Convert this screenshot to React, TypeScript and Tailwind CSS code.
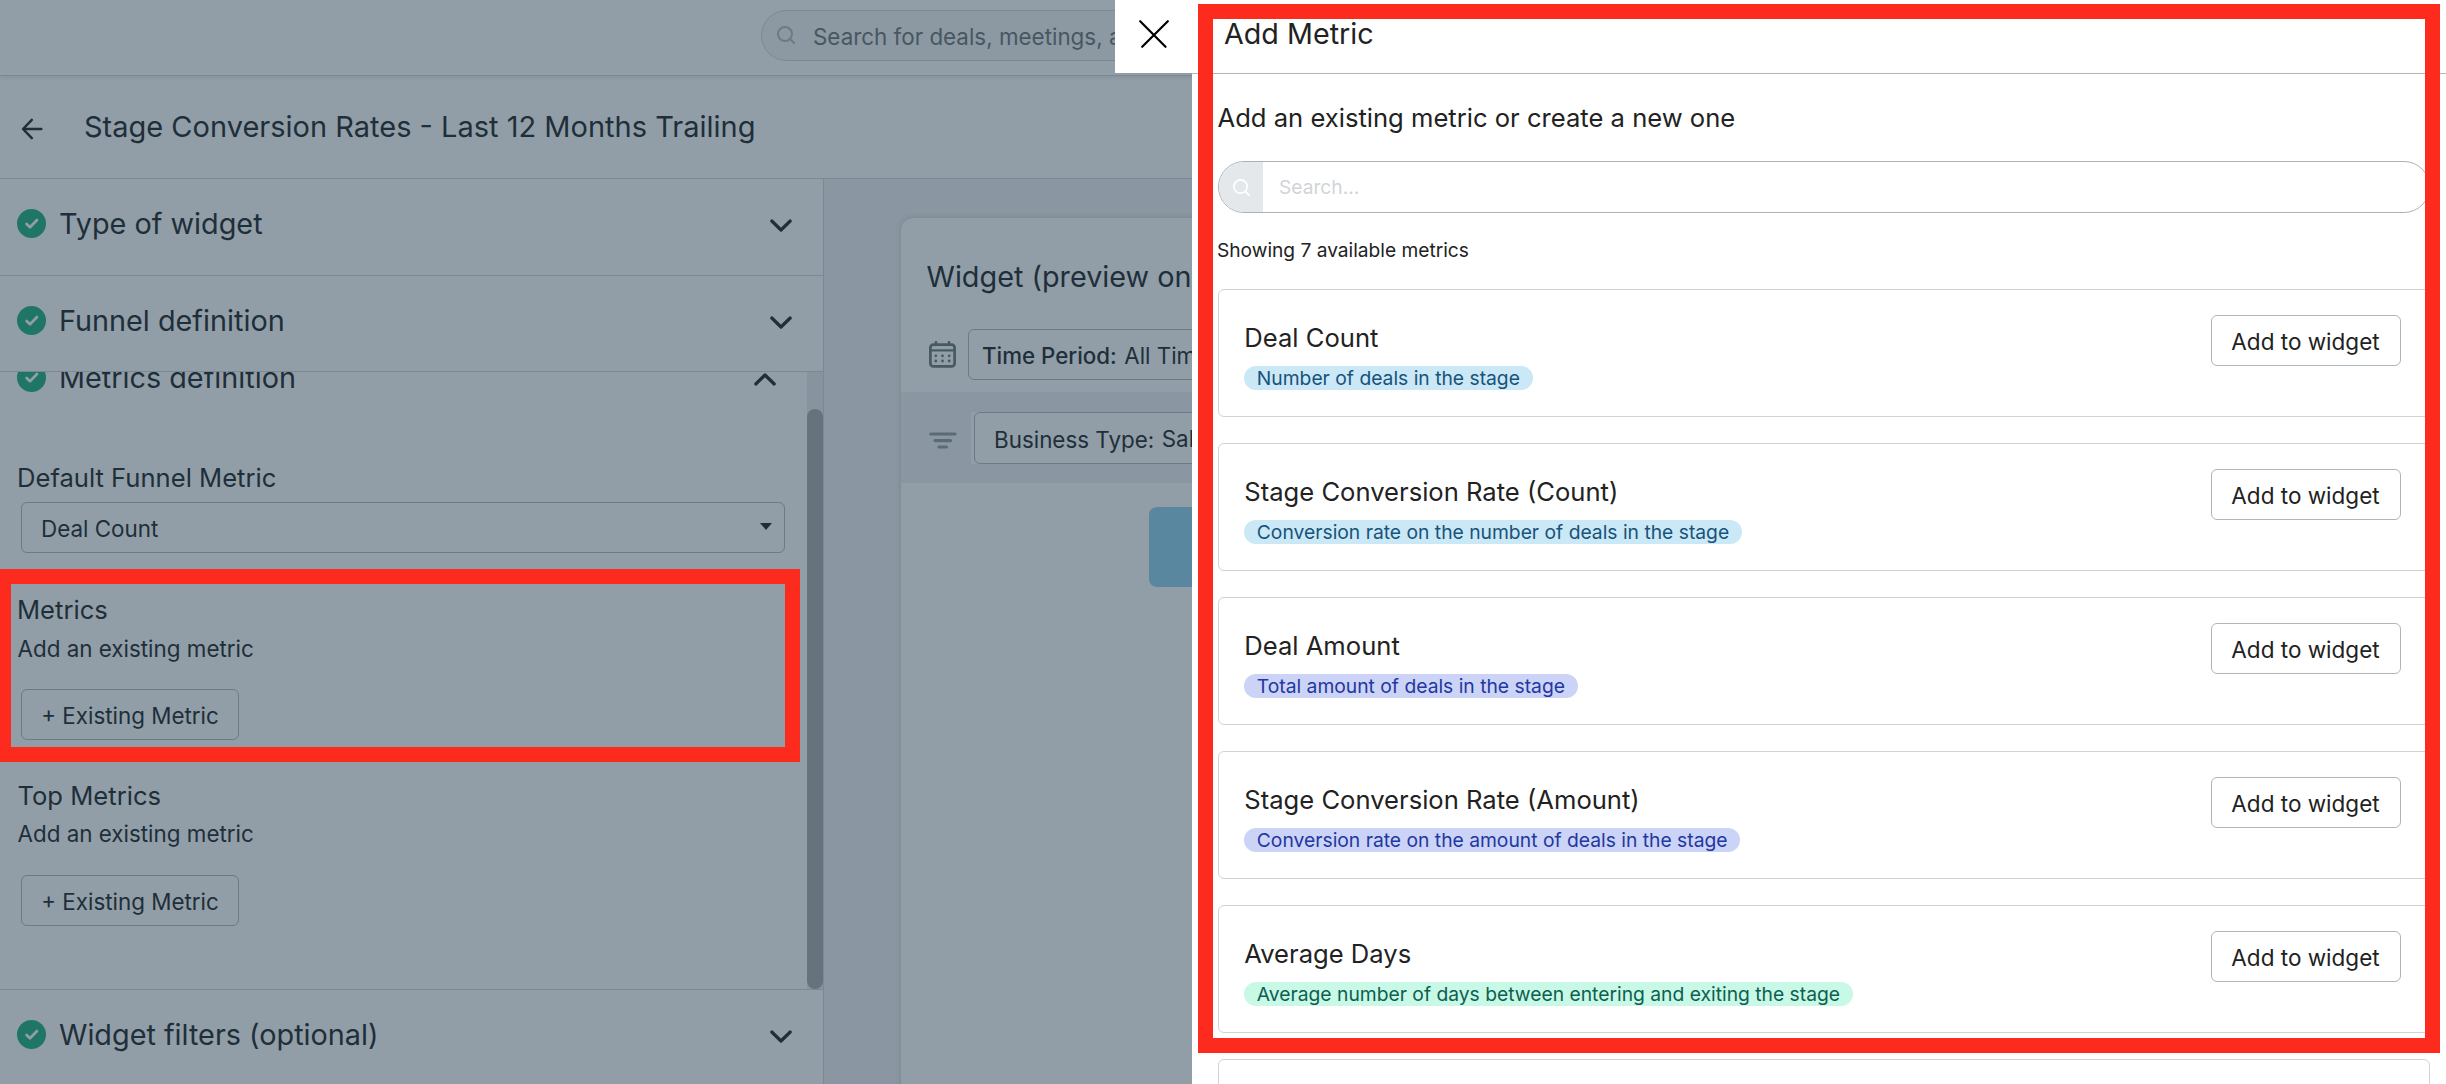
import type { ReactNode } from "react";

type Metric = {
  name: string;
  description: string;
  tone: "sky" | "indigo" | "green";
};

const METRICS: Metric[] = [
  { name: "Deal Count", description: "Number of deals in the stage", tone: "sky" },
  {
    name: "Stage Conversion Rate (Count)",
    description: "Conversion rate on the number of deals in the stage",
    tone: "sky",
  },
  { name: "Deal Amount", description: "Total amount of deals in the stage", tone: "indigo" },
  {
    name: "Stage Conversion Rate (Amount)",
    description: "Conversion rate on the amount of deals in the stage",
    tone: "indigo",
  },
  {
    name: "Average Days",
    description: "Average number of days between entering and exiting the stage",
    tone: "green",
  },
];

const toneClasses = {
  sky: "bg-[#cae8f6] text-[#17537a]",
  indigo: "bg-[#cbd3f7] text-[#2337a0]",
  green: "bg-[#c8f8e6] text-[#0d5f50]",
};

function SearchIcon({ className }: { className?: string }) {
  return (
    <svg viewBox="0 0 18 18" fill="none" stroke="currentColor" className={className}>
      <circle cx="8" cy="8" r="7" />
      <path d="M13 13 L17 17" strokeLinecap="round" />
    </svg>
  );
}

function CheckBadge() {
  return (
    <svg viewBox="0 0 29 29" className="size-[29px] shrink-0">
      <circle cx="14.5" cy="14.5" r="14.5" fill="#1f7666" />
      <path
        d="M9.6 15 L13 18.3 L20 11"
        fill="none"
        stroke="#919ea7"
        strokeWidth="2.7"
        strokeLinecap="round"
        strokeLinejoin="round"
      />
    </svg>
  );
}

function Chevron({ up = false }: { up?: boolean }) {
  return (
    <svg
      viewBox="0 0 22 13"
      fill="none"
      stroke="#1f2f3a"
      strokeWidth="3.2"
      strokeLinecap="round"
      strokeLinejoin="round"
      className={`h-[13px] w-[22px] ${up ? "rotate-180" : ""}`}
    >
      <path d="M1.8 2 L11 11 L20.2 2" />
    </svg>
  );
}

function CalendarIcon() {
  return (
    <svg viewBox="0 0 27 27" fill="none" stroke="#475963" className="size-[27px]">
      <rect x="1.4" y="3.6" width="24.2" height="21.8" rx="3" strokeWidth="2.7" />
      <path d="M1.4 9.4 H25.6" strokeWidth="2.2" />
      <path d="M7 1.2 V4 M20 1.2 V4" strokeWidth="2.6" strokeLinecap="round" />
      <path
        d="M6.8 14.8h.01 M13.5 14.8h.01 M20.2 14.8h.01 M6.8 20h.01 M13.5 20h.01 M20.2 20h.01"
        strokeWidth="2.8"
        strokeLinecap="round"
      />
    </svg>
  );
}

function SectionRow({ title, className = "" }: { title: string; className?: string }) {
  return (
    <div className={`flex items-start justify-between border-b border-[#7b8993] pl-[17px] pr-[31px] ${className}`}>
      <div className="flex items-center gap-[13px] pt-[30px]">
        <CheckBadge />
        <h2 className="text-[28.8px] leading-[29px]">{title}</h2>
      </div>
      <div className="pt-10">
        <Chevron />
      </div>
    </div>
  );
}

function OutlineButton({ children }: { children: ReactNode }) {
  return (
    <button className="ml-[21px] block h-[51px] w-[218px] rounded-md border border-[#6c7a84] pt-1 text-[22.4px] leading-none">
      {children}
    </button>
  );
}

function Sidebar() {
  return (
    <aside className="flex w-[824px] shrink-0 flex-col border-r border-[#7b8993]">
      <SectionRow title="Type of widget" className="h-[97px] shrink-0" />
      <SectionRow title="Funnel definition" className="h-[96px] shrink-0" />

      {/* Scrolled metrics section */}
      <div className="flex h-[618px] shrink-0 overflow-hidden border-b border-[#7b8993]">
        <div className="flex-1">
          <div className="-mt-[9px] flex items-center justify-between pl-[17px] pr-[31px]">
            <div className="flex items-center gap-[13px]">
              <CheckBadge />
              <h2 className="text-[28.8px] leading-[29px]">Metrics definition</h2>
            </div>
            <div className="pt-1">
              <Chevron up />
            </div>
          </div>

          <h3 className="mt-[70px] pl-[17px] text-[25.6px] leading-8">Default Funnel Metric</h3>
          <div className="ml-[21px] mt-2 flex h-[51px] w-[764px] items-center justify-between rounded-md border border-[#6c7a84] pl-[19px] pr-3 text-[22.4px]">
            <span className="pt-[3px]">Deal Count</span>
            <svg viewBox="0 0 12 7" className="mb-0.5 h-[7px] w-3">
              <path d="M0 0 H12 L6 7 Z" fill="#1f2f3a" />
            </svg>
          </div>

          <h3 className="mt-[41px] pl-[17px] text-[25.6px] leading-8">Metrics</h3>
          <p className="mt-[9px] pl-[17.5px] text-[22.4px] leading-7">Add an existing metric</p>
          <div className="mt-[26px]">
            <OutlineButton>+ Existing Metric</OutlineButton>
          </div>

          <h3 className="mt-[40px] pl-[17.5px] text-[25.6px] leading-8">Top Metrics</h3>
          <p className="mt-[8px] pl-[17.5px] text-[22.4px] leading-7">Add an existing metric</p>
          <div className="mt-[27px]">
            <OutlineButton>+ Existing Metric</OutlineButton>
          </div>
        </div>
        <div className="w-4 bg-[#87949f] pt-[37px]">
          <div className="h-[580px] rounded-full bg-[#66737d]" />
        </div>
      </div>

      <SectionRow title="Widget filters (optional)" className="h-[95px] shrink-0" />
    </aside>
  );
}

function Preview() {
  return (
    <section className="min-w-0 flex-1 overflow-hidden bg-[#8a97a2] pl-[77px] pt-[39px]">
      <div className="h-[900px] w-[1500px] rounded-xl bg-[#919ea7] shadow-[0_0_5px_rgba(50,70,85,0.25)]">
        <h2 className="pl-[25.5px] pt-[43px] text-[28.8px] leading-8">Widget (preview only)</h2>
        <div className="mt-[36px] flex items-center gap-3 pl-7">
          <CalendarIcon />
          <div className="flex h-[51px] w-[400px] items-center gap-[7.5px] rounded-md border border-[#6c7a84] pl-[13px] pt-0.5 text-[22.3px]">
            <span className="font-medium">Time Period:</span>
            <span>All Time</span>
          </div>
        </div>

        <div className="mt-3 flex h-[91px] items-center bg-[#8a97a2] pl-7">
          <svg viewBox="0 0 28 17" fill="none" stroke="#5a6b76" strokeWidth="3.2" strokeLinecap="round" className="mt-[5px] h-[17px] w-7">
            <path d="M1.8 2 H26 M6 8.6 H21.5 M10 15 H17.5" />
          </svg>
          <div className="ml-[14px] bg-[#919ea7] pl-[3px]">
            <div className="flex h-[52px] w-[400px] items-center gap-[7.5px] rounded-md border border-[#6c7a84] pl-[19px] pt-1 text-[22.4px]">
              <span>Business Type:</span>
              <span className="-mt-0.5">Sales</span>
            </div>
          </div>
        </div>

        <div className="ml-[248px] mt-6 h-20 w-[400px] rounded-lg bg-[#5987a0]" />
      </div>
    </section>
  );
}

function MetricCard({ metric }: { metric: Metric }) {
  return (
    <div className="flex h-32 shrink-0 items-start justify-between rounded-md border border-[#d0d4d7] pl-[25px] pr-7 pt-[25px]">
      <div className="pt-[7px]">
        <h3 className="pl-[0.3px] text-[25.6px] leading-8">{metric.name}</h3>
        <p
          className={`mt-3 w-fit rounded-full px-[12.8px] text-[19.28px] leading-6 ${toneClasses[metric.tone]}`}
        >
          {metric.description}
        </p>
      </div>
      <button className="h-[51px] w-[190px] rounded-md border border-[#b0b5b8] pr-px pt-1 text-[22.5px] leading-none">
        Add to widget
      </button>
    </div>
  );
}

function AddMetricDrawer() {
  return (
    <div className="absolute inset-y-0 left-[1192px] right-0 flex flex-col bg-white text-[#222]">
      <header className="h-[74px] shrink-0 border-b border-[#b0b5b8] pl-8 pt-[18px]">
        <h1 className="text-[28.7px] leading-8">Add Metric</h1>
      </header>
      <div className="flex min-h-0 flex-1 flex-col overflow-hidden pl-[26px] pr-4">
        <h2 className="-ml-[0.5px] mt-7 text-[25.6px] leading-8">Add an existing metric or create a new one</h2>
        <div className="mt-[27px] flex h-[52px] shrink-0 items-center overflow-hidden rounded-full border border-[#adb2b5]">
          <div className="flex h-full w-11 items-center bg-[#e4e8eb] pl-[14px] text-white">
            <SearchIcon className="size-[17px] stroke-[1.8]" />
          </div>
          <span className="pl-4 text-[19.2px] text-[#d0d4d7]">Search...</span>
        </div>
        <p className="-ml-px mt-[25px] text-[19.15px] leading-6">Showing 7 available metrics</p>
        <div className="mt-[27px] flex flex-col gap-[26px]">
          {METRICS.map((metric) => (
            <MetricCard key={metric.name} metric={metric} />
          ))}
          <div className="h-32 shrink-0 rounded-md border border-[#d0d4d7]" />
        </div>
      </div>
    </div>
  );
}

export default function App() {
  return (
    <div className="relative flex h-[1084px] w-[2446px] flex-col overflow-hidden bg-[#919ea7] font-['Inter',sans-serif] text-[#1f2f3a]">
      {/* Top bar */}
      <header className="h-[76px] shrink-0 border-b border-[#7b8993] pl-[761px] pt-[10px] shadow-[0_2px_4px_rgba(60,80,95,0.12)]">
        <div className="flex h-[51px] w-[900px] items-center rounded-full border border-[#7b8993] bg-[#8c99a3] pl-[15px] text-[22.4px] text-[#475761]">
          <SearchIcon className="mb-0.5 size-[18px] stroke-2 text-[#6d7a83]" />
          <span className="ml-[18px] pt-0.5">Search for deals, meetings, and accounts</span>
        </div>
      </header>

      <div className="flex h-[103px] shrink-0 items-center border-b border-[#7b8993] pl-[21px]">
        <svg
          viewBox="0 0 22 22"
          fill="none"
          stroke="#1f2f3a"
          strokeWidth="2.5"
          strokeLinecap="round"
          strokeLinejoin="round"
          className="mt-1 size-[22px]"
        >
          <path d="M20.3 11 H2.2 M10.8 1.9 L2 11 L10.8 20.1" />
        </svg>
        <h1 className="ml-[41px] text-[29px]">Stage Conversion Rates - Last 12 Months Trailing</h1>
      </div>

      <main className="flex min-h-0 w-[1192px] flex-1 overflow-hidden">
        <Sidebar />
        <Preview />
      </main>

      <AddMetricDrawer />
      <button className="absolute left-[1115px] top-0 flex h-[73px] w-[78px] items-start bg-white pl-6 pt-5">
        <svg viewBox="0 0 30 28" fill="none" stroke="#000" strokeWidth="2.2" strokeLinecap="round" className="h-7 w-[30px]">
          <path d="M1.2 1.2 L26.5 26.8 M28.8 1.2 L3.2 26.8" />
        </svg>
      </button>

      {/* Highlight frames */}
      <div className="absolute -left-1 top-[569px] h-[193px] w-[804px] border-[15px] border-[#fd2b1e]" />
      <div className="absolute left-[1198px] top-1 h-[1049px] w-[1242px] border-[15px] border-[#fd2b1e]" />
    </div>
  );
}
